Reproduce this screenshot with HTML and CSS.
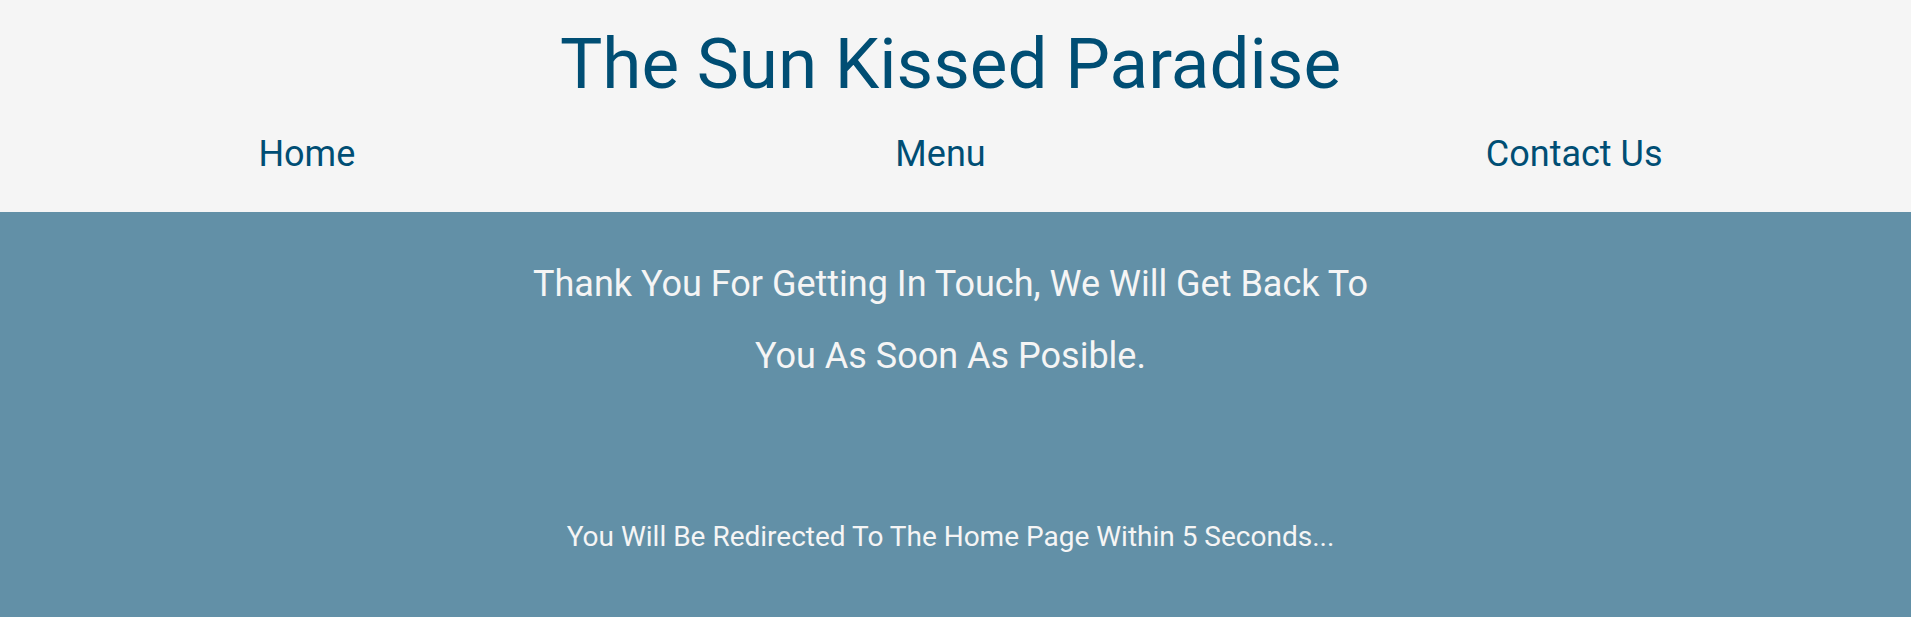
FILE: index.html
```html
<!DOCTYPE html>
<html lang="en">
<head>
<meta charset="utf-8">
<title>The Sun Kissed Paradise</title>
<link rel="stylesheet" href="styles.css">
</head>
<body>
<header class="site-header">
  <h1 class="site-title">The Sun Kissed Paradise</h1>
  <nav class="site-nav">
    <a class="nav-link" href="#home">Home</a>
    <a class="nav-link" href="#menu">Menu</a>
    <a class="nav-link" href="#contact">Contact Us</a>
  </nav>
</header>
<main class="message">
  <h2 class="thanks">Thank You For Getting In Touch, We Will Get Back To You As Soon As Posible.</h2>
  <p class="redirect">You Will Be Redirected To The Home Page Within 5 Seconds...</p>
</main>
</body>
</html>
```
FILE: styles.css
```css
* { box-sizing: border-box; }
body {
  margin: 0;
  min-height: 100vh;
  display: flex;
  flex-direction: column;
  font-family: Roboto, sans-serif;
  font-weight: 400;
  color: #f5f5f5;
  background: #6290a7;
}
.site-header {
  padding: 18px 10px 30px 0;
  background: #f5f5f5;
  color: #004e74;
  text-align: center;
}
.site-title {
  margin: 0 0 16px;
  font-size: 71px;
  font-weight: 400;
  line-height: 92px;
}
.site-nav {
  display: grid;
  grid-template-columns: repeat(3, 1fr);
  justify-items: center;
  margin: 0 10px 0 -10px;
}
.nav-link {
  color: inherit;
  font-size: 36px;
  line-height: 56px;
  text-decoration: none;
}
.message {
  flex: 1;
  padding: 36px 10px 36px 0;
  text-align: center;
}
.thanks {
  width: 45%;
  margin: 0 auto 113px;
  font-size: 36px;
  font-weight: 400;
  line-height: 72px;
}
.redirect {
  margin: 0;
  font-size: 28px;
  line-height: 64px;
}
```
